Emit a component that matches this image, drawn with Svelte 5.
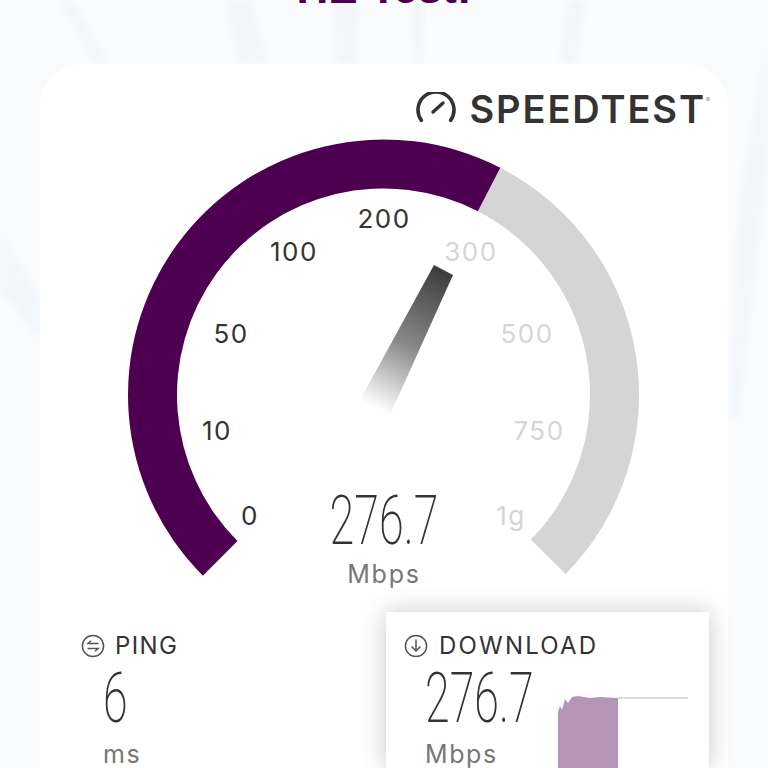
<script>
  const polar = (r, deg) => {
    const a = (deg * Math.PI) / 180;
    return [383.5 + r * Math.sin(a), 395 - r * Math.cos(a)];
  };

  const band = (from, to, outer = 255.5, inner = 206.5) => {
    const [ax, ay] = polar(outer, from);
    const [bx, by] = polar(outer, to);
    const [cx, cy] = polar(inner, to);
    const [dx, dy] = polar(inner, from);
    const large = to - from > 180 ? 1 : 0;
    return `M${ax} ${ay}A${outer} ${outer} 0 ${large} 1 ${bx} ${by}L${cx} ${cy}A${inner} ${inner} 0 ${large} 0 ${dx} ${dy}Z`;
  };

  const ticks = [
    { label: "0", x: 250, y: 525, on: true },
    { label: "10", x: 217, y: 440, on: true },
    { label: "50", x: 231, y: 343, on: true },
    { label: "100", x: 294, y: 261, on: true },
    { label: "200", x: 384, y: 228, on: true },
    { label: "300", x: 471, y: 261, on: false },
    { label: "500", x: 527, y: 343, on: false },
    { label: "750", x: 539, y: 440, on: false },
    { label: "1g", x: 511, y: 525, on: false }
  ];

  const bars = "M558 768V712L560 706L562 710L565 699L568 703L572 697L578 696L590 698L600 697L618 698V768Z";

  // faint light streaks behind the card
  const streaks = [
    "M60 0H72L108 64H94Z",
    "M225 0H250L268 64H240Z",
    "M333 0H358L356 64H336Z",
    "M412 0H424L422 64H414Z",
    "M568 0H585L575 64H560Z",
    "M768 40V150L738 420H730L740 200Z",
    "M0 230L40 300V340L0 290Z"
  ];
</script>

<main class="page">
  <svg class="backdrop" viewBox="0 0 768 768" width="768" height="768">
    <defs>
      <filter id="soft"><feGaussianBlur stdDeviation="4" /></filter>
    </defs>
    {#each streaks as d}
      <path {d} fill="#f3f6f9" filter="url(#soft)" />
    {/each}
  </svg>

  <h1>HE Test!</h1>

  <section class="card">
    <div class="brand">
      <svg class="brand-icon" viewBox="0 0 40 34" width="40" height="34">
        <path d="M5.3 28.3A18 18 0 1 1 34.7 28.3" fill="none" stroke="#333" stroke-width="3.6" stroke-linecap="round" />
        <path d="M17 20L27 11" fill="none" stroke="#333" stroke-width="3.4" stroke-linecap="round" />
      </svg>
      <span class="brand-name">SPEEDTEST</span><span class="reg">®</span>
    </div>

    <svg class="gauge" viewBox="40 130 688 470" width="688" height="470">
      <defs>
        <linearGradient id="needle" gradientUnits="userSpaceOnUse" x1="444" y1="270" x2="376" y2="408">
          <stop offset="0" stop-color="#3c3c3c" />
          <stop offset="0.55" stop-color="#3c3c3c" stop-opacity="0.6" />
          <stop offset="1" stop-color="#3c3c3c" stop-opacity="0" />
        </linearGradient>
      </defs>
      <path d={band(27.2, 134.5)} fill="#d5d5d5" />
      <path d={band(-135, 27.2)} fill="#4d004f" />
      <path d="M434 265L453 275L390 415L360 400Z" fill="url(#needle)" />
      {#each ticks as t}
        <text x={t.x} y={t.y} class:off={!t.on} class="tick">{t.label}</text>
      {/each}
      <text class="big-value" transform="translate(384 544) scale(.66 1)">276.7</text>
      <text class="unit" x="384" y="583">Mbps</text>
    </svg>

    <div class="stats">
      <div class="stat ping">
        <div class="stat-head">
          <svg viewBox="0 0 24 24" width="24" height="24">
            <circle cx="12" cy="12" r="10.6" fill="none" stroke="#555" stroke-width="1.5" />
            <path d="M17.5 9.5H7L10 6.8M6.5 14.5H17L14 17.2" fill="none" stroke="#555" stroke-width="1.5" />
          </svg>
          <span>PING</span>
        </div>
        <div class="value">6</div>
        <div class="stat-unit">ms</div>
      </div>

      <div class="stat download">
        <div class="stat-head">
          <svg viewBox="0 0 24 24" width="24" height="24">
            <circle cx="12" cy="12" r="10.6" fill="none" stroke="#555" stroke-width="1.5" />
            <path d="M12 5.5V17M7.5 12.5L12 17L16.5 12.5" fill="none" stroke="#555" stroke-width="1.5" />
          </svg>
          <span>DOWNLOAD</span>
        </div>
        <div class="value">276.7</div>
        <div class="stat-unit">Mbps</div>
        <svg class="graph" viewBox="386 612 323 156" width="323" height="156">
          <path d="M618 698H688" stroke="#c4b4c6" stroke-width="1.2" fill="none" />
          <path d={bars} fill="#b594b8" />
        </svg>
      </div>
    </div>
  </section>
</main>

<style>
  :global(body) {
    margin: 0;
    background: #f9fbfd;
  }

  .page {
    position: relative;
    height: 768px;
    overflow: hidden;
    background: #f9fbfd;
    font-family: "Inter", sans-serif;
  }

  .backdrop {
    position: absolute;
    left: 0;
    top: 0;
  }

  h1 {
    position: relative;
    margin: -32px 0 0;
    height: 96px;
    font: 900 44px/40px "Liberation Sans", sans-serif;
    color: #4d004f;
    text-align: center;
  }

  .card {
    position: relative;
    margin: 0 40px;
    height: 760px;
    border-radius: 42px 42px 0 0;
    background: #fff;
  }

  .brand {
    box-sizing: border-box;
    display: flex;
    align-items: center;
    justify-content: flex-end;
    height: 66px;
    padding: 24px 18px 0 0;
    color: #333;
  }

  .brand-icon {
    margin-right: 13px;
  }

  .brand-name {
    font: 600 38px/1 "Inter", sans-serif;
    letter-spacing: 1.9px;
  }

  .reg {
    font-size: 6px;
    align-self: flex-start;
    margin-top: 8px;
    color: #888;
  }

  .gauge {
    display: block;
  }

  .tick {
    font: 400 26px "Inter", sans-serif;
    letter-spacing: 1.5px;
    fill: #333;
    text-anchor: middle;
  }

  .tick.off {
    fill: #d5d5d5;
  }

  .big-value {
    font: 200 68px "Roboto", sans-serif;
    fill: #333;
    text-anchor: middle;
  }

  .unit {
    font: 400 25px "Inter", sans-serif;
    letter-spacing: 1.8px;
    fill: #777;
    text-anchor: middle;
  }

  .stats {
    display: flex;
    margin-top: 12px;
  }

  .stat {
    box-sizing: border-box;
    height: 156px;
    color: #333;
  }

  .ping {
    width: 346px;
    padding: 20px 0 0 41px;
  }

  .download {
    position: relative;
    width: 323px;
    padding: 20px 0 0 18px;
    background: #fff;
    box-shadow: 0 0 24px rgba(0, 0, 0, 0.22);
  }

  .stat-head {
    display: flex;
    align-items: center;
    gap: 10px;
    font: 400 24px/28px "Inter", sans-serif;
    letter-spacing: 1.4px;
  }

  .download .stat-head {
    gap: 11px;
    letter-spacing: 2.2px;
  }

  .value {
    margin: 4px 0 0 22px;
    font: 200 70px/68px "Roboto", sans-serif;
    transform: scaleX(0.64);
    transform-origin: left;
  }

  .stat-unit {
    margin: 8px 0 0 22px;
    font: 400 25px/28px "Inter", sans-serif;
    letter-spacing: 1.6px;
    color: #777;
  }

  .download .stat-unit,
  .download .value {
    margin-left: 21px;
  }

  .graph {
    position: absolute;
    left: 0;
    top: 0;
  }
</style>
